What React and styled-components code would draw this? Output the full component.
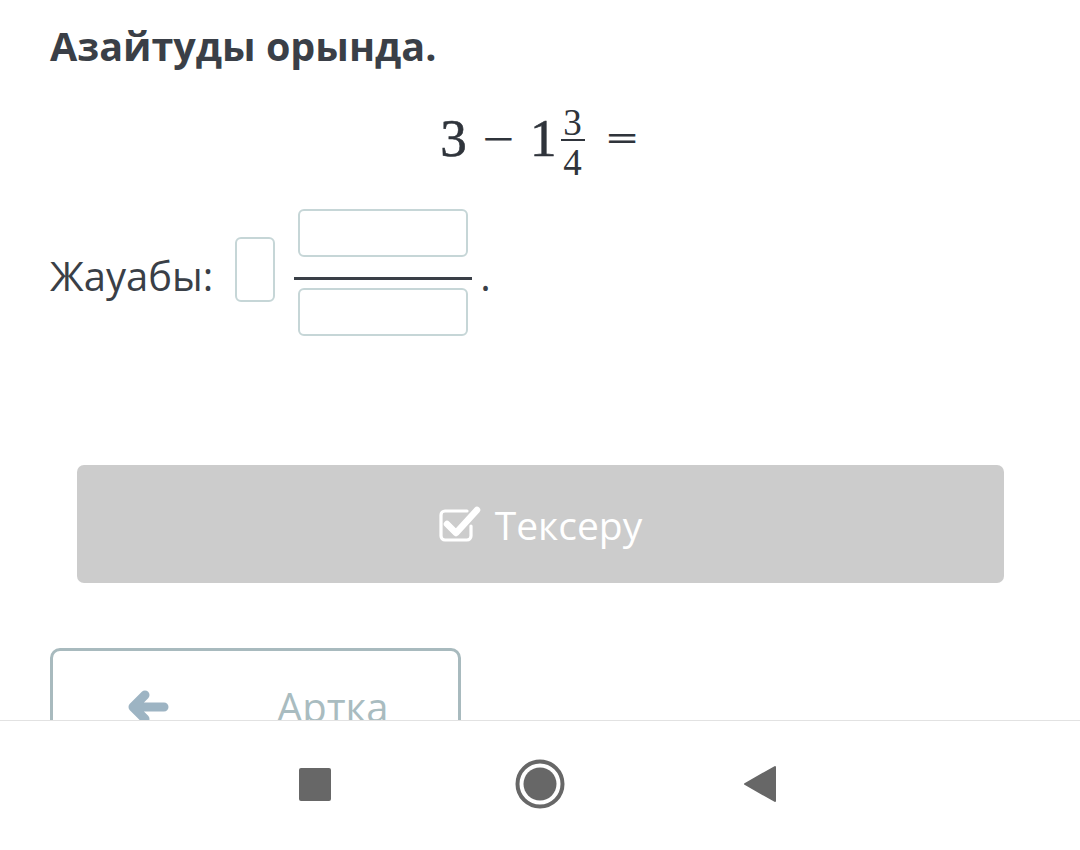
import React from "react";
import styled, { createGlobalStyle } from "styled-components";

const Global = createGlobalStyle`
  html, body { margin: 0; padding: 0; background: #fff; }
  body { font-family: "Open Sans", "Liberation Sans", sans-serif; color: #3a3f47; }
  * { box-sizing: border-box; }
`;

const Screen = styled.div`
  width: 1080px;
  height: 850px;
  display: flex;
  flex-direction: column;
  overflow: hidden;
`;

const Content = styled.div`
  height: 720px;
  flex-shrink: 0;
  overflow: hidden;
  padding: 22px 50px 0 50px;
  display: flex;
  flex-direction: column;
  & > * { flex-shrink: 0; }
`;

const Title = styled.h1`
  margin: 0;
  font-size: 39.5px;
  line-height: 48px;
  font-weight: 700;
  color: #3a3f47;
`;

const MathRow = styled.div`
  margin-top: 28px;
  height: 80px;
  display: flex;
  justify-content: center;
  align-items: center;
  font-family: "Liberation Serif", "DejaVu Serif", serif;
  color: #2f343b;
`;

const Sym = styled.span`
  font-size: 53px;
  line-height: 1;
  margin-left: ${(p) => p.$ml || 0}px;
  -webkit-text-stroke: 0.6px #2f343b;
`;

const Op = styled.span`
  font-family: "DejaVu Serif", serif;
  font-size: 42px;
  line-height: 1;
  margin-left: ${(p) => p.$ml || 0}px;
  transform: scaleY(0.75);
`;

const Frac = styled.span`
  display: inline-flex;
  flex-direction: column;
  align-items: center;
  margin-left: ${(p) => p.$ml || 0}px;
  margin-top: 8px;
`;

const FracNum = styled.span`
  font-size: 37px;
  line-height: 1;
  margin-bottom: -2px;
`;

const FracBar = styled.span`
  width: 24px;
  height: 2px;
  background: #2f343b;
`;

const FracDen = styled.span`
  font-size: 37px;
  line-height: 1;
  margin-top: 3px;
`;

const AnswerRow = styled.div`
  margin-top: 31px;
  display: flex;
  align-items: flex-start;
`;

const Label = styled.span`
  font-size: 40px;
  line-height: 49px;
  margin-top: 42px;
  color: #3a3f47;
`;

const InputBox = styled.div`
  width: ${(p) => p.$w}px;
  height: ${(p) => p.$h}px;
  border: 2px solid #c6d6d7;
  border-radius: 6px;
  background: #fff;
  margin-top: ${(p) => p.$mt || 0}px;
  margin-left: ${(p) => p.$ml || 0}px;
`;

const FracInput = styled.div`
  display: flex;
  flex-direction: column;
  align-items: center;
  margin-left: 19px;
  width: 178px;
`;

const AnswerLine = styled.div`
  width: 178px;
  height: 3px;
  background: #3a3f47;
  margin: 20px 0 8px;
`;

const Dot = styled.span`
  font-size: 40px;
  line-height: 49px;
  margin-top: 42px;
  margin-left: 8px;
`;

const CheckButton = styled.button`
  margin: 129px 26px 0 27px;
  height: 118px;
  border: none;
  border-radius: 7px;
  background: #cccccc;
  color: #fff;
  display: flex;
  align-items: center;
  justify-content: center;
  gap: 14px;
  font-family: "Open Sans", sans-serif;
  font-size: 39px;
  padding: 0;
`;

const BackButton = styled.button`
  margin-top: 65px;
  width: 411px;
  height: 118px;
  border: 3px solid #a8babe;
  border-radius: 10px;
  background: #fff;
  display: flex;
  align-items: center;
  align-self: flex-start;
  padding: 0 0 0 75px;
  color: #a9bcc0;
  font-family: "Open Sans", sans-serif;
  font-size: 40px;
`;

const BackLabel = styled.span`
  margin-left: 107px;
  line-height: 48px;
`;

const NavBar = styled.div`
  height: 130px;
  border-top: 1px solid #e2e2e2;
  display: flex;
  align-items: center;
  justify-content: center;
  padding-bottom: 3px;
  background: #fff;
`;

const NavItem = styled.div`
  width: 50px;
  height: 50px;
  display: flex;
  align-items: center;
  justify-content: center;
  margin: 0 ${(p) => p.$m || 0}px;
`;

const CheckIcon = () => (
  <svg width="42" height="38" viewBox="0 0 42 38">
    <path
      d="M32 21 V31 a4 4 0 0 1 -4 4 H6 a4 4 0 0 1 -4 -4 V10 a4 4 0 0 1 4 -4 H28"
      fill="none"
      stroke="#fff"
      strokeWidth="3.2"
      strokeLinecap="round"
    />
    <path
      d="M8 19 L17 28 L38 5"
      fill="none"
      stroke="#fff"
      strokeWidth="6.5"
      strokeLinecap="round"
      strokeLinejoin="round"
    />
  </svg>
);

const ArrowIcon = () => (
  <svg width="42" height="34" viewBox="0 0 42 34">
    <path
      d="M36 17 H6 M17 5 L5 17 L17 29"
      fill="none"
      stroke="#9db4c3"
      strokeWidth="9"
      strokeLinecap="round"
      strokeLinejoin="round"
    />
  </svg>
);

const SquareIcon = () => (
  <svg width="34" height="34" viewBox="0 0 34 34">
    <rect x="1" y="1" width="32" height="33" rx="2" fill="#676767" />
  </svg>
);

const HomeIcon = () => (
  <svg width="50" height="50" viewBox="0 0 50 50">
    <circle cx="25" cy="25" r="22.5" fill="none" stroke="#676767" strokeWidth="4" />
    <circle cx="25" cy="25" r="16.5" fill="#676767" />
  </svg>
);

const BackTriangle = () => (
  <svg width="50" height="40" viewBox="0 0 50 40">
    <path
      d="M5 20 L35 3 L35 37 Z"
      fill="#676767"
      stroke="#676767"
      strokeWidth="2"
      strokeLinejoin="round"
    />
  </svg>
);

export default function App() {
  return (
    <>
      <Global />
      <Screen>
        <Content>
          <Title>Азайтуды орында.</Title>
          <MathRow>
            <Sym>3</Sym>
            <Op $ml={14}>−</Op>
            <Sym $ml={14}>1</Sym>
            <Frac $ml={4}>
              <FracNum>3</FracNum>
              <FracBar />
              <FracDen>4</FracDen>
            </Frac>
            <Op $ml={20}>=</Op>
          </MathRow>
          <AnswerRow>
            <Label>Жауабы:</Label>
            <InputBox $w={40} $h={65} $mt={28} $ml={22} />
            <FracInput>
              <InputBox $w={170} $h={48} />
              <AnswerLine />
              <InputBox $w={170} $h={48} />
            </FracInput>
            <Dot>.</Dot>
          </AnswerRow>
          <CheckButton>
            <CheckIcon />
            <span>Тексеру</span>
          </CheckButton>
          <BackButton>
            <ArrowIcon />
            <BackLabel>Артка</BackLabel>
          </BackButton>
        </Content>
        <NavBar>
          <NavItem>
            <SquareIcon />
          </NavItem>
          <NavItem $m={175}>
            <HomeIcon />
          </NavItem>
          <NavItem>
            <BackTriangle />
          </NavItem>
        </NavBar>
      </Screen>
    </>
  );
}
